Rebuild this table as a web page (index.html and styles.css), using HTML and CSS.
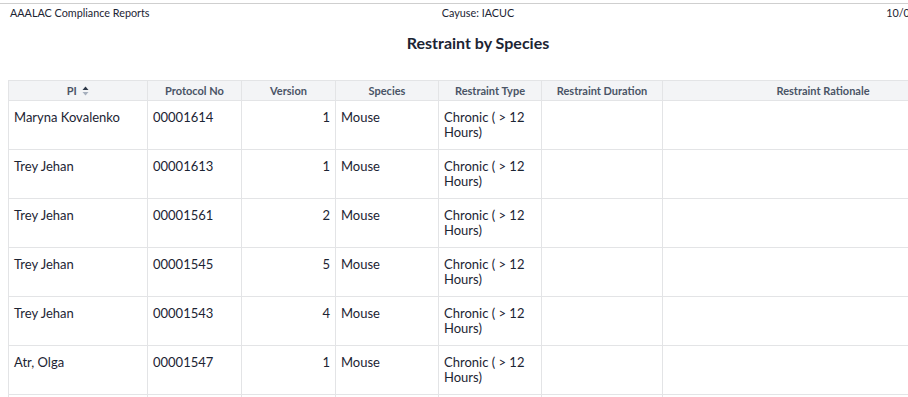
FILE: index.html
```html
<!DOCTYPE html>
<html lang="en">
<head>
<meta charset="utf-8">
<title>Restraint by Species</title>
<link rel="stylesheet" href="styles.css">
</head>
<body>
<div class="page">
  <header class="topbar">
    <span class="tb-left">AAALAC Compliance Reports</span>
    <span class="tb-center">Cayuse: IACUC</span>
    <span class="tb-right">10/09/2023</span>
  </header>
  <h1 class="title">Restraint by Species</h1>
  <table class="report">
    <colgroup>
      <col class="c-pi"><col class="c-proto"><col class="c-ver"><col class="c-spec"><col class="c-type"><col class="c-dur"><col class="c-rat">
    </colgroup>
    <thead>
      <tr>
        <th>PI <svg class="sort" width="7" height="10" viewBox="0 0 7 10"><path d="M3.5 0.5 L6.5 4 L0.5 4 Z" fill="#2d3748"/><path d="M0.5 6 L6.5 6 L3.5 9.5 Z" fill="#a6afbd"/></svg></th>
        <th>Protocol No</th>
        <th>Version</th>
        <th>Species</th>
        <th>Restraint Type</th>
        <th>Restraint Duration</th>
        <th>Restraint Rationale</th>
      </tr>
    </thead>
    <tbody>
      <tr><td>Maryna Kovalenko</td><td>00001614</td><td class="num">1</td><td>Mouse</td><td>Chronic ( &gt; 12 Hours)</td><td></td><td></td></tr>
      <tr><td>Trey Jehan</td><td>00001613</td><td class="num">1</td><td>Mouse</td><td>Chronic ( &gt; 12 Hours)</td><td></td><td></td></tr>
      <tr><td>Trey Jehan</td><td>00001561</td><td class="num">2</td><td>Mouse</td><td>Chronic ( &gt; 12 Hours)</td><td></td><td></td></tr>
      <tr><td>Trey Jehan</td><td>00001545</td><td class="num">5</td><td>Mouse</td><td>Chronic ( &gt; 12 Hours)</td><td></td><td></td></tr>
      <tr><td>Trey Jehan</td><td>00001543</td><td class="num">4</td><td>Mouse</td><td>Chronic ( &gt; 12 Hours)</td><td></td><td></td></tr>
      <tr><td>Atr, Olga</td><td>00001547</td><td class="num">1</td><td>Mouse</td><td>Chronic ( &gt; 12 Hours)</td><td></td><td></td></tr>
      <tr><td>&nbsp;</td><td></td><td class="num"></td><td></td><td>&nbsp;<br>&nbsp;</td><td></td><td></td></tr>
    </tbody>
  </table>
</div>
</body>
</html>
```

FILE: styles.css
```css
html, body {
  margin: 0;
  padding: 0;
  overflow: hidden;
  background: #ffffff;
}
body {
  font-family: Lato, "Open Sans", sans-serif;
  color: #1c2433;
}
.page {
  width: 990px;
}
.topbar {
  box-sizing: border-box;
  margin-top: 3px;
  width: 956px;
  border-top: 1px solid #cfcfcf;
  padding: 2px 10px 0 10px;
  display: grid;
  grid-template-columns: 1fr auto 1fr;
  font-size: 10.8px;
  line-height: 14px;
  color: #1c2433;
}
.tb-right {
  text-align: right;
}
.title {
  margin: 13px 0 0 0;
  width: 956px;
  text-align: center;
  font-size: 16px;
  line-height: 20px;
  font-weight: 700;
  color: #1c2433;
}
.report {
  margin: 27px 0 0 8px;
  border-collapse: collapse;
  table-layout: fixed;
  width: 975px;
}
.c-pi { width: 139px; }
.c-proto { width: 94px; }
.c-ver { width: 94px; }
.c-spec { width: 103px; }
.c-type { width: 103px; }
.c-dur { width: 121px; }
.c-rat { width: 321px; }
.report th,
.report td {
  border: 1px solid #e3e4e6;
}
.report th {
  background: #f3f4f6;
  height: 19px;
  padding: 0 5px;
  font-size: 11px;
  line-height: 18px;
  font-weight: 700;
  color: #4a5466;
  text-align: center;
  white-space: nowrap;
  overflow: hidden;
}
.sort {
  vertical-align: -1px;
  margin-left: 3px;
}
.report td {
  padding: 9px 5px 9px 5px;
  font-size: 13px;
  line-height: 15px;
  vertical-align: top;
  text-align: left;
  color: #1c2433;
}
.report td.num {
  text-align: right;
}
```
